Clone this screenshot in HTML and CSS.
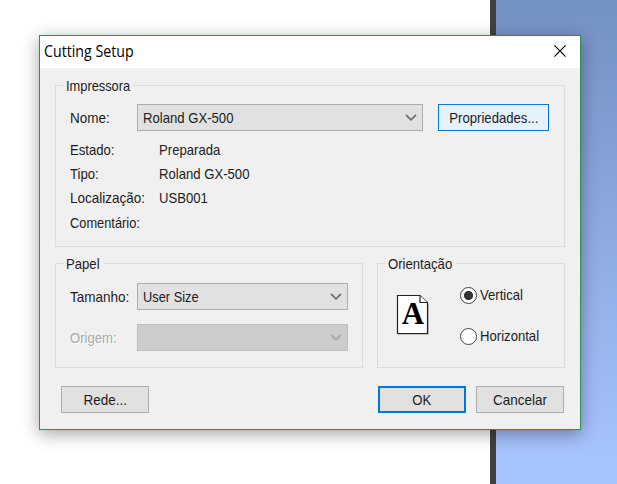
FILE: index.html
```html
<!DOCTYPE html>
<html lang="pt">
<head>
<meta charset="utf-8">
<title>Cutting Setup</title>
<link rel="stylesheet" href="styles.css">
</head>
<body>
<div class="desktop">
  <section class="dialog" role="dialog">
    <header class="titlebar">
      <h1 class="title">Cutting Setup</h1>
      <svg class="close" width="12" height="12" viewBox="0 0 12 12"><path d="M.4.4 11.6 11.6M11.6.4.4 11.6" stroke="#000" stroke-width="1.1" fill="none"/></svg>
    </header>
    <main class="content">
      <fieldset class="group printer">
        <legend><span class="t tight">Impressora</span></legend>
        <div class="line">
          <span class="label"><span class="t loose">Nome:</span></span>
          <div class="combo wide"><span class="t">Roland GX-500</span><svg class="chevron" width="12" height="7" viewBox="0 0 12 7"><path d="M1 .8 6 5.8 11 .8"/></svg></div>
          <button class="btn hot"><span class="t">Propriedades...</span></button>
        </div>
        <dl class="info">
          <dt><span class="t">Estado:</span></dt><dd><span class="t">Preparada</span></dd>
          <dt><span class="t">Tipo:</span></dt><dd><span class="t">Roland GX-500</span></dd>
          <dt><span class="t loose">Localização:</span></dt><dd><span class="t">USB001</span></dd>
          <dt><span class="t tight">Comentário:</span></dt><dd></dd>
        </dl>
      </fieldset>
      <div class="columns">
        <fieldset class="group paper">
          <legend><span class="t">Papel</span></legend>
          <div class="line">
            <span class="label"><span class="t loose">Tamanho:</span></span>
            <div class="combo"><span class="t tight">User Size</span><svg class="chevron" width="12" height="7" viewBox="0 0 12 7"><path d="M1 .8 6 5.8 11 .8"/></svg></div>
          </div>
          <div class="line disabled">
            <span class="label"><span class="t">Origem:</span></span>
            <div class="combo"><span></span><svg class="chevron" width="12" height="7" viewBox="0 0 12 7"><path d="M1 .8 6 5.8 11 .8"/></svg></div>
          </div>
        </fieldset>
        <fieldset class="group orientation">
          <legend><span class="t">Orientação</span></legend>
          <div class="choices">
            <svg class="page" width="34" height="42" viewBox="0 0 34 42">
              <path d="M2 40.5H32.5V10" fill="none" stroke="#c4c4c4"/>
              <path d="M1.5 1.5H24L31.5 8.5V39.5H1.5Z" fill="#fff" stroke="#222" stroke-width="1.2"/>
              <path d="M24 1.5V8.5H31.5" fill="#fff" stroke="#222" stroke-width="1.2"/>
              <text x="17" y="30" text-anchor="middle" class="letter">A</text>
            </svg>
            <div class="radios">
              <label class="radio"><span class="dot on"></span><span class="t">Vertical</span></label>
              <label class="radio"><span class="dot"></span><span class="t">Horizontal</span></label>
            </div>
          </div>
        </fieldset>
      </div>
      <footer class="actions">
        <button class="btn net"><span class="t loose">Rede...</span></button>
        <button class="btn primary"><span class="t">OK</span></button>
        <button class="btn"><span class="t loose">Cancelar</span></button>
      </footer>
    </main>
  </section>
</div>
</body>
</html>
```
FILE: styles.css
```css
* { box-sizing: border-box; }
body { margin: 0; font: 15px/18px "Liberation Sans", Arial, sans-serif; color: #1c1c20; }
.desktop {
  width: 617px; height: 484px; padding: 35px 0 0 39px; overflow: hidden;
  background:
    linear-gradient(#404040, #404040) 490px 0 / 6px 100% no-repeat,
    linear-gradient(#7592c5, #7996ca 12%, #a8c4ff 97%) 496px 0 / 121px 100% no-repeat,
    #fff;
}
.dialog {
  width: 542px; height: 395px; background: #f0f0f0; border: 1px solid #2b9152;
  box-shadow: 0 4px 16px rgba(0,0,0,.36);
}
.titlebar { height: 32px; background: #fff; display: flex; align-items: center; justify-content: space-between; padding: 0 14px 0 4px; }
.title { margin: -2px 0 0; font: 400 15.5px/20px "Open Sans", sans-serif; color: #000; transform: scaleX(.915); transform-origin: 0 50%; }
.close { display: block; margin-top: -2px; }
.content { padding: 9px 15px 0; }
.t { display: inline-block; white-space: nowrap; transform: scaleX(.875); transform-origin: 0 50%; }
.t.tight { transform: scaleX(.855); }
.t.loose { transform: scaleX(.9); }
.group { min-width: 0; margin: 0; border: 1px solid #dcdcdc; padding: 0 14px; }
.group legend { height: 17px; line-height: 18px; margin-left: -6px; padding: 0 0 0 2px; }
.printer { height: 170px; }
.printer legend { width: 69px; }
.paper legend { width: 40px; }
.orientation legend { width: 70px; }
.line { display: flex; height: 27px; align-items: center; margin-top: 10px; }
.label { width: 67px; }
.combo {
  width: 211px; height: 27px; display: flex; align-items: center; justify-content: space-between;
  padding: 0 5px; background: #e1e1e1; border: 1px solid #adadad;
}
.combo.wide { width: 286px; }
.chevron path { fill: none; stroke: #707070; stroke-width: 1.8; }
.btn {
  height: 27px; width: 88px; padding: 0; font: inherit; color: inherit;
  background: #e1e1e1; border: 1px solid #adadad; border-radius: 0;
}
.btn .t { transform-origin: 50% 50%; }
.btn.hot { width: 111px; margin-left: 15px; background: #e5f1fb; border-color: #0078d7; }
.btn.primary { border: 2px solid #0078d7; }
.info { margin: 10px 0 0; display: grid; grid-template-columns: 89px 1fr; grid-auto-rows: 24.2px; line-height: 18px; }
.info dd { margin: 0; }
.columns { display: grid; grid-template-columns: 308px 188px; justify-content: space-between; margin-top: 8px; }
.columns .group { height: 113px; }
.paper .line { margin-top: 11px; }
.paper .line.disabled { margin-top: 14px; color: #a8a8a8; }
.disabled .label { text-shadow: 1px 1px 0 #fff; }
.disabled .combo { background: #ccc; border-color: #bfbfbf; }
.disabled .chevron path { stroke: #a8a8a8; }
.choices { display: flex; padding: 14px 0 0 4px; }
.page { margin-top: 8px; }
.letter { font: bold 31px "Liberation Serif", serif; fill: #000; }
.radios { display: grid; gap: 23px; margin-left: 29.5px; }
.radio { display: flex; align-items: center; gap: 3.5px; height: 18px; }
.dot { width: 17px; height: 17px; border: 1.5px solid #444; border-radius: 50%; background: #fff; }
.dot.on { background: radial-gradient(circle, #333 0 4.2px, #fff 4.9px); }
.actions { display: grid; grid-template-columns: 307px 88px 88px; column-gap: 10px; margin: 18px 0 0 6px; }
```
